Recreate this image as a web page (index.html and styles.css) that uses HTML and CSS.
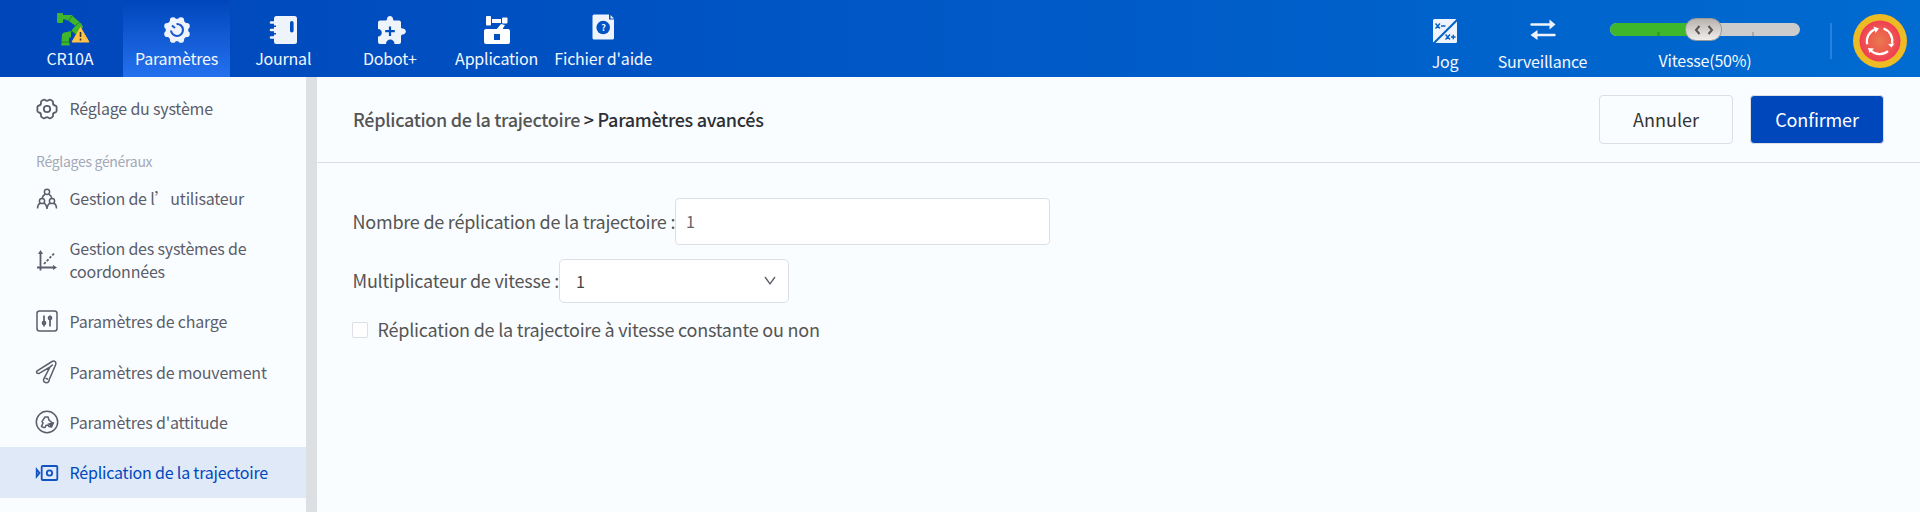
FILE: index.html
```html
<!DOCTYPE html>
<html lang="fr">
<head>
<meta charset="utf-8">
<title>Réplication de la trajectoire</title>
<link rel="stylesheet" href="styles.css">
</head>
<body>
<header class="topbar">
  <nav class="nav">
    <a class="nav-item">
      <svg class="nav-icon" width="36" height="36" viewBox="0 0 36 36"><g fill="#3fb62c"><rect x="5" y="3" width="6" height="10" rx="1"/><path d="M11 5h8.500l1.500 1v3l-1 1.500h-5l-1-1h-3z"/><path d="M20.500 6l8 7-4 3.500-8.500-6 4-.5z"/><path d="M24 15l5-2 2 4-6 8-6-4z"/><path d="M10 24l2-1.500 3-.5 4-1v6l-2 1v4h-7.500z"/><path d="M10 32h7l1 3.500H9z"/></g><path d="M20 6l-3.500 4.500M27.500 12l-4.500 4M19 20l4 4M10 32h7" stroke="#17703c" stroke-width=".8" fill="none"/><path d="M28.500 17.500L37 32H20z" fill="#ffc247" stroke="#ffc247" stroke-linejoin="round"/><path d="M28.500 22v5M28.500 28.500v2" stroke="#333" stroke-width="1.600"/></svg>
      <span>CR10A</span>
    </a>
    <a class="nav-item active">
      <svg class="nav-icon" width="36" height="36" viewBox="0 0 36 36"><g fill="#eef3fc"><circle cx="18" cy="20" r="11.300"/><circle cx="22" cy="10.300" r="3.100"/><circle cx="14" cy="10.300" r="3.100"/><circle cx="8.300" cy="16" r="3.100"/><circle cx="8.300" cy="24" r="3.100"/><circle cx="14" cy="29.700" r="3.100"/><circle cx="22" cy="29.700" r="3.100"/><circle cx="27.700" cy="24" r="3.100"/><circle cx="27.700" cy="16" r="3.100"/></g><path d="M17.500 14a6 6 0 1 1-5.500 6.500M13 15.500l3 2.500" fill="none" stroke="#1a58cf" stroke-width="2.100"/></svg>
      <span>Paramètres</span>
    </a>
    <a class="nav-item">
      <svg class="nav-icon" width="36" height="36" viewBox="0 0 36 36"><rect x="9" y="6" width="23" height="28" rx="2.500" fill="#eef3fc"/><path d="M6 12.500h5M6 20h5M6 27.500h5" stroke="#eef3fc" stroke-width="2.600" stroke-linecap="round"/><path d="M8.500 16.300H11M8.500 23.700H11" stroke="#004dc0" stroke-width="1.600"/><rect x="25" y="11" width="3.600" height="11.500" rx="1.800" fill="#004dc0"/></svg>
      <span>Journal</span>
    </a>
    <a class="nav-item">
      <svg class="nav-icon" width="36" height="36" viewBox="0 0 36 36"><path d="M8 10.500h5.500q1.500 0 1.500-1.500c0-4 6-4 6 0q0 1.500 1.500 1.500H27q2 0 2 2v5q0 1 1.500 1c4.500 0 4.500 6 0 6q-1.500 0-1.500 1.500V32q0 2-2 2h-4.500c0-6-8.500-6-8.500 0H8q-2 0-2-2v-5.500c5 0 5-7.500 0-7.500v-6.500q0-2 2-2z" fill="#eef3fc"/><path d="M18 16.500v9.500M13.200 21.200h9.600" stroke="#0050c2" stroke-width="2.200"/></svg>
      <span>Dobot+</span>
    </a>
    <a class="nav-item">
      <svg class="nav-icon" width="36" height="36" viewBox="0 0 36 36"><g fill="#fff"><rect x="7" y="6" width="5" height="9.500" rx="1"/><path d="M13 9h9v4h-9z"/><rect x="23" y="7.500" width="5.500" height="6" rx="1"/><path d="M22 14l4 1-3 5h-6z"/><path fill-rule="evenodd" d="M7 19h22q2 0 2 2v11q0 2-2 2H7q-2 0-2-2V21q0-2 2-2zm8 5v6h6v-6z"/></g></svg>
      <span>Application</span>
    </a>
    <a class="nav-item">
      <svg class="nav-icon" width="36" height="36" viewBox="0 0 36 36"><path d="M9 4.500h15v5h5V28q0 1.500-1.500 1.500h-18.500Q7.500 29.500 7.500 28V6q0-1.500 1.500-1.500z" fill="#eef3fc"/><path d="M25.500 5l3.500 3.500h-3.500z" fill="#eef3fc"/><circle cx="18.200" cy="17.500" r="6.800" fill="#0053c4"/><text x="18.500" y="20.500" class="help-mark">?</text></svg>
      <span>Fichier d'aide</span>
    </a>
  </nav>
  <div class="tools">
    <a class="tool jog">
      <svg width="26" height="26" viewBox="0 0 26 26"><rect x="1" y="1" width="24" height="24" rx="1.500" fill="#eef3fc"/><path d="M1.500 25.500L25.500 1.500" stroke="#0062c9" stroke-width="2"/><path d="M3.500 5.500l4.500 5m0-5l-4.500 5M9 8h4.500M13.500 16.500l4.500 5m0-5l-4.500 5M19 19h4.600M21.300 16.700v4.600" stroke="#0062c9" stroke-width="1.400" fill="none"/></svg>
      <span>Jog</span>
    </a>
    <a class="tool monitor">
      <svg width="26" height="26" viewBox="0 0 26 26"><path d="M1.500 6.500H21M24.500 17H6" stroke="#eef3fc" stroke-width="2.400" stroke-linecap="round"/><path d="M19.500 1.500l6 5-6 5zM7.500 12l-7 5 7 5z" fill="#eef3fc"/></svg>
      <span>Surveillance</span>
    </a>
    <div class="speed">
      <div class="track"><i class="fill"></i><i class="tick"></i><i class="tick end"></i>
        <b class="knob"><svg width="20" height="10" viewBox="0 0 20 10"><path d="M5.500 1L2 5l3.500 4M14.500 1L18 5l-3.500 4" fill="none" stroke="#555" stroke-width="2"/></svg></b>
      </div>
      <span>Vitesse(50%)</span>
    </div>
    <i class="separator"></i>
    <svg class="stop" width="54" height="54" viewBox="0 0 54 54"><defs><radialGradient id="red"><stop offset="0" stop-color="#e97850"/><stop offset=".55" stop-color="#ed5d4e"/><stop offset="1" stop-color="#f13c56"/></radialGradient></defs><circle cx="27" cy="27" r="27" fill="#edbb24"/><circle cx="27" cy="27" r="20.500" fill="url(#red)"/><path d="M14.200 30.200A13 13 0 0 1 22 15.200M30.500 14.500A13 13 0 0 1 39 29.500M35 37.200A13 13 0 0 1 18 36.800" fill="none" stroke="#fff" stroke-width="2.200"/><path d="M20.500 12.500l5.500 2-3.500 4.500zM35 30l6.500-.5-3 4zM15 34l6 .5-4.500 4.500z" fill="#fff"/></svg>
  </div>
</header>
<div class="body">
  <aside class="sidebar">
    <a class="side-item first"><svg width="24" height="24" viewBox="0 0 24 24"><path d="M8.500 2.800Q9.500 2.300 10.500 3.300 12 4.500 13.500 3.300 14.500 2.300 15.500 2.800L17.500 4Q18.300 4.500 18 6 17.800 8 20 8.500 21.500 8.700 21.600 10V14Q21.500 15.300 20 15.500 17.800 16 18 18 18.300 19.500 17.500 20L15.500 21.200Q14.500 21.700 13.500 20.700 12 19.500 10.500 20.700 9.500 21.700 8.500 21.200L6.500 20Q5.700 19.500 6 18 6.200 16 4 15.500 2.500 15.300 2.400 14V10Q2.500 8.700 4 8.500 6.200 8 6 6 5.700 4.500 6.500 4Z"/><circle cx="12" cy="12" r="3.200"/></svg><span>Réglage du système</span></a>
    <div class="side-heading">Réglages généraux</div>
    <a class="side-item users"><svg class="thin" width="24" height="24" viewBox="0 0 24 24"><circle cx="12" cy="4.800" r="2.600"/><circle cx="7" cy="14" r="2.600"/><circle cx="17" cy="14" r="2.600"/><path d="M10 7.500Q7.500 8.500 7.300 11.300M14 7.500q2.500 1 2.700 3.800M2.500 21.500q0-4 2.800-5.500M8.700 16q3 1.500 3.300 6 .3-4.500 3.300-6M18.700 16q2.800 1.500 2.800 5.500"/></svg><span>Gestion de l’utilisateur</span></a>
    <a class="side-item coords"><svg width="24" height="24" viewBox="0 0 24 24"><path d="M5.500 4v18.500M2 19.500h17"/><path d="M9 16L19.500 5" stroke-dasharray="2.500 1.500"/><path d="M5.500 2L8 6H3zM22 19.500L18 17v5z" fill="#5b5d6b" stroke="none"/></svg><span>Gestion des systèmes de coordonnées</span></a>
    <a class="side-item charge"><svg class="thin" width="24" height="24" viewBox="0 0 24 24"><rect x="2" y="2" width="20" height="20" rx="2.500"/><path d="M9 6.500v11M15 6.500v11" stroke-width="1.700"/><circle cx="9" cy="14" r="1.600"/><circle cx="15" cy="9" r="1.600"/></svg><span>Paramètres de charge</span></a>
    <a class="side-item"><svg class="thin" width="24" height="24" viewBox="0 0 24 24"><path d="M1.800 11.200L17 1.500Q19 .6 20.300 1.700 21.300 3 20.500 5L14.300 19.500Q14 22.700 11.300 22.700 8.200 22.500 8.600 19.300L15 7 3.800 13.600Q1 13.800 1.800 11.200zM15 7l2.800-2.400M10.500 18.300l2.500 1"/></svg><span>Paramètres de mouvement</span></a>
    <a class="side-item attitude"><svg class="thin" width="24" height="24" viewBox="0 0 24 24"><circle cx="12" cy="12" r="10.700"/><path d="M8.500 17.500l-2-1 1.500-3.500-1-1.500 3-4.500h3l1 3 4 3.500-1.500 3.500-2.500-.5-1-1.500-2 .5-1 2z"/><path d="M14 14l4-1-1.500 3z" fill="#5b5d6b"/></svg><span>Paramètres d'attitude</span></a>
    <a class="side-item selected"><svg width="24" height="24" viewBox="0 0 24 24"><rect x="6.700" y="5" width="15.600" height="14" rx="1"/><circle cx="14.500" cy="12" r="2.700"/><path d="M1.700 8.500v7L4.500 12z"/></svg><span>Réplication de la trajectoire</span></a>
  </aside>
  <main class="main">
    <div class="page-head">
      <h1 class="crumbs"><span class="parent">Réplication de la trajectoire</span> &gt; Paramètres avancés</h1>
      <button class="btn">Annuler</button>
      <button class="btn primary">Confirmer</button>
    </div>
    <div class="form">
      <div class="row"><label class="label-count">Nombre de réplication de la trajectoire :</label><div class="input">1</div></div>
      <div class="row second"><label class="label-speed">Multiplicateur de vitesse :</label><div class="select"><span>1</span><svg width="12" height="10" viewBox="0 0 12 10"><path d="M1 1l5 7 5-7" fill="none" stroke="#5b5d66" stroke-width="1.300"/></svg></div></div>
      <div class="row third"><i class="checkbox"></i><span>Réplication de la trajectoire à vitesse constante ou non</span></div>
    </div>
  </main>
</div>
</body>
</html>
```
FILE: styles.css
```css
* { box-sizing: border-box; }
body { margin: 0; height: 512px; overflow: hidden; display: flex; flex-direction: column; background: #fafdff; font-family: "Noto Sans CJK SC", sans-serif; font-size: 16px; letter-spacing: -.2px; color: #555; }
.topbar { height: 77px; flex: none; display: flex; justify-content: space-between; background: linear-gradient(90deg, #0046bb, #006bd1); color: #f3f7ff; }
.nav { display: flex; padding-left: 16.500px; }
.nav-item { width: 106.700px; height: 77px; display: flex; flex-direction: column; align-items: center; padding-top: 10px; line-height: 24px; white-space: nowrap; }
.nav-item.active { background: linear-gradient(180deg, #0046bb, #2471ee); }
.nav-icon { flex: none; overflow: visible; }
.help-mark { font: bold 9px "Noto Sans CJK SC", sans-serif; fill: #eef3fc; text-anchor: middle; }
.tools { display: flex; }
.tool { display: flex; flex-direction: column; align-items: center; padding-top: 18px; line-height: 24px; }
.tool span { margin-top: 5px; }
.jog { width: 60px; }
.monitor { width: 135px; }
.speed { width: 190px; display: flex; flex-direction: column; align-items: flex-start; padding-top: 23px; line-height: 24px; }
.speed > span { width: 190px; text-align: center; margin-top: 12px; }
.track { position: relative; width: 190px; height: 13px; border-radius: 7px; background: #ccc; }
.fill { position: absolute; left: 0; top: 0; width: 95px; height: 13px; border-radius: 7px 0 0 7px; background: #3fb72d; }
.tick { position: absolute; left: 47px; top: 9px; width: 3px; height: 4px; background: #319d2c; }
.tick.end { left: 142px; width: 2px; background: #aaa; }
.knob { position: absolute; left: 75px; top: -5px; width: 37px; height: 23px; border-radius: 11px; border: 1px solid #999; background: linear-gradient(#b8b2ad, #f0eeec); display: flex; align-items: center; justify-content: center; }
.separator { width: 2px; height: 36px; margin: 23px 21px 0 30px; background: #2881dc; }
.stop { margin: 14px 13px 0 0; }
.body { flex: 1; display: flex; min-height: 0; }
.sidebar { width: 317px; flex: none; border-right: 11px solid #dde0e3; }
.side-item { height: 50px; padding-left: 35px; display: flex; align-items: center; gap: 10.500px; line-height: 23px; color: #5b5d6b; }
.side-item span { width: 225px; white-space: nowrap; }
.side-item svg { flex: none; fill: none; stroke: #5b5d6b; stroke-width: 1.800; }
.side-item svg.thin { stroke-width: 1.500; }
.side-item.first { height: 63px; }
.side-heading { height: 32px; padding: 10px 0 0 36px; line-height: 22px; font-size: 14px; letter-spacing: -.3px; color: #a4a8b5; }
.side-item.users { height: 53px; }
.side-item.coords { height: 70px; }
.side-item.coords span { width: 190px; white-space: normal; }
.side-item.charge { height: 52px; }
.side-item.selected { height: 51px; background: #dfe9f8; color: #0048bd; }
.side-item.selected svg { stroke: #1352c1; }
.main { flex: 1; }
.page-head { height: 86px; border-bottom: 1px solid #dcdfe6; padding: 0 36px; display: flex; align-items: center; font-size: 18px; }
.crumbs { flex: 1; margin: 0; padding-bottom: 1px; font-size: 18px; font-weight: 500; line-height: 28px; letter-spacing: -.31px; color: #2c2f36; }
.parent { color: #555; }
.btn { width: 134px; height: 49px; padding: 0 0 2px; border: 1px solid #dcdfe6; border-radius: 4px; background: #fafdff; color: #333; font: 400 18px/28px "Noto Sans CJK SC", sans-serif; }
.btn.primary { margin-left: 17px; background: #0047bb; color: #fff; letter-spacing: -.12px; }
.form { padding: 35px 0 0 35.500px; font-size: 18px; letter-spacing: -.23px; }
.row { display: flex; align-items: center; white-space: nowrap; }
.row label, .row span { padding-bottom: 1px; }
.label-count { width: 322.500px; }
.label-speed { width: 206.500px; }
.input { width: 375px; height: 47px; padding-left: 10px; line-height: 45px; font-size: 16px; border: 1px solid #dcdfe6; border-radius: 4px; background: #fff; color: #606266; }
.second { margin-top: 14px; }
.second .label-speed { padding-bottom: 2px; }
.select { width: 230px; height: 44px; padding: 0 12px 0 16px; display: flex; align-items: center; justify-content: space-between; font-size: 16px; border: 1px solid #dcdfe6; border-radius: 5px; background: #fff; color: #444; }
.third { margin: 13px 0 0 -.5px; gap: 9.500px; }
.checkbox { width: 16px; height: 16px; border: 1px solid #dcdfe6; border-radius: 2px; background: #fff; }
```
